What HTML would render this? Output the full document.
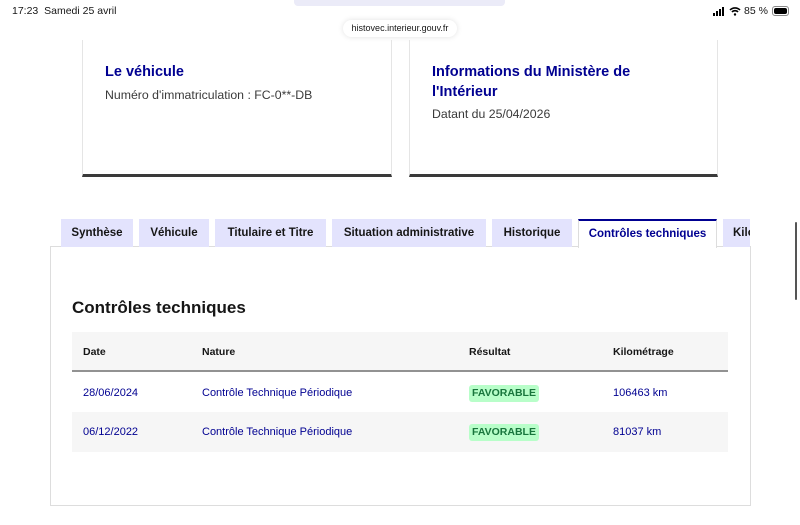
<!DOCTYPE html>
<html><head><meta charset="utf-8"><style>
*{margin:0;padding:0;box-sizing:border-box}
body{width:800px;height:525px;background:#fff;font-family:"Liberation Sans",sans-serif;position:relative;overflow:hidden;color:#161616}
.abs{position:absolute}
.card{position:absolute;top:40px;height:137px;border-left:1px solid #e5e5e5;border-right:1px solid #e5e5e5;border-bottom:3px solid #3a3a3a}
.card h2{position:absolute;left:22px;font-size:14.5px;font-weight:bold;color:#000091;line-height:20px}
.card p{position:absolute;left:22px;font-size:12.3px;color:#3a3a3a}
.tab{position:absolute;top:219px;height:28px;background:#e3e3fd;font-size:11.5px;font-weight:bold;line-height:29px;text-align:center;color:#161616}
.cell{position:absolute;font-size:11px}
.badge{position:absolute;left:469px;width:70px;height:17px;background:#b8fec9;color:#18753c;font-weight:bold;font-size:10.5px;line-height:17px;text-align:center;border-radius:3px}
</style></head><body>
<div class="abs" style="left:294px;top:0;width:211px;height:6px;background:#ebebf8;border-radius:0 0 4px 4px"></div>
<div class="abs" style="left:12px;top:5px;font-size:10.5px">17:23&nbsp; Samedi 25 avril</div>
<svg class="abs" style="left:713px;top:7px" width="14" height="9"><rect x="0" y="6" width="2" height="3"/><rect x="3" y="4" width="2" height="5"/><rect x="6" y="2" width="2" height="7"/><rect x="9" y="0" width="2" height="9"/></svg>
<svg class="abs" style="left:729px;top:6px" width="12" height="10"><path d="M1 4a7 7 0 0 1 10 0M3 6a4 4 0 0 1 6 0" stroke="#000" stroke-width="1.6" fill="none"/><circle cx="6" cy="8.5" r="1.2"/></svg>
<div class="abs" style="left:744px;top:5px;font-size:10.5px">85 %</div>
<div class="abs" style="left:772px;top:6px;width:17px;height:10px;border:1px solid #888;border-radius:3px;padding:1px"><div style="width:100%;height:100%;background:#000;border-radius:2px"></div></div>
<div class="abs" style="left:343px;top:20px;width:114px;height:17px;background:#fff;border-radius:9px;box-shadow:0 0 6px rgba(0,0,0,.12);font-size:9px;line-height:17px;text-align:center">histovec.interieur.gouv.fr</div>

<div class="card" style="left:82px;width:310px"><h2 style="top:22px">Le véhicule</h2><p style="top:48px">Numéro d'immatriculation : FC-0**-DB</p></div>
<div class="card" style="left:409px;width:309px"><h2 style="top:22px">Informations du Ministère de<br>l'Intérieur</h2><p style="top:67px">Datant du 25/04/2026</p></div>

<div class="abs" style="left:50px;top:247px;width:701px;height:259px;border:1px solid #ddd;border-top:none"></div>
<div class="abs" style="left:50px;top:246px;width:701px;height:1px;background:#ddd"></div>
<div class="tab" style="left:61px;width:72px">Synthèse</div>
<div class="tab" style="left:139px;width:70px">Véhicule</div>
<div class="tab" style="left:215px;width:111px">Titulaire et Titre</div>
<div class="tab" style="left:332px;width:154px">Situation administrative</div>
<div class="tab" style="left:492px;width:80px">Historique</div>
<div class="tab" style="left:578px;width:139px;background:#fff;color:#000091;border-top:2px solid #000091;border-left:1px solid #ddd;border-right:1px solid #ddd;height:29px;line-height:26px">Contrôles techniques</div>
<div class="tab" style="left:723px;width:27px;text-align:left;padding-left:10px;overflow:hidden;white-space:nowrap">Kilo</div>
<div class="abs" style="left:795px;top:222px;width:2px;height:78px;background:#555;border-radius:1px"></div>

<div class="abs" style="left:72px;top:298px;font-size:17px;font-weight:bold">Contrôles techniques</div>
<div class="abs" style="left:72px;top:332px;width:656px;height:40px;background:#f6f6f6;border-bottom:2px solid #929292"></div>
<div class="abs" style="left:72px;top:412px;width:656px;height:40px;background:#f6f6f6"></div>
<div class="cell" style="left:83px;top:346px;font-weight:bold;font-size:10.5px">Date</div>
<div class="cell" style="left:202px;top:346px;font-weight:bold;font-size:10.5px">Nature</div>
<div class="cell" style="left:469px;top:346px;font-weight:bold;font-size:10.5px">Résultat</div>
<div class="cell" style="left:613px;top:346px;font-weight:bold;font-size:10.5px">Kilométrage</div>
<div class="cell" style="left:83px;top:387px;color:#000091">28/06/2024</div>
<div class="cell" style="left:202px;top:387px;color:#000091">Contrôle Technique Périodique</div>
<div class="badge" style="top:385px">FAVORABLE</div>
<div class="cell" style="left:613px;top:387px;color:#000091">106463 km</div>
<div class="cell" style="left:83px;top:426px;color:#000091">06/12/2022</div>
<div class="cell" style="left:202px;top:426px;color:#000091">Contrôle Technique Périodique</div>
<div class="badge" style="top:424px">FAVORABLE</div>
<div class="cell" style="left:613px;top:426px;color:#000091">81037 km</div>
</body></html>
